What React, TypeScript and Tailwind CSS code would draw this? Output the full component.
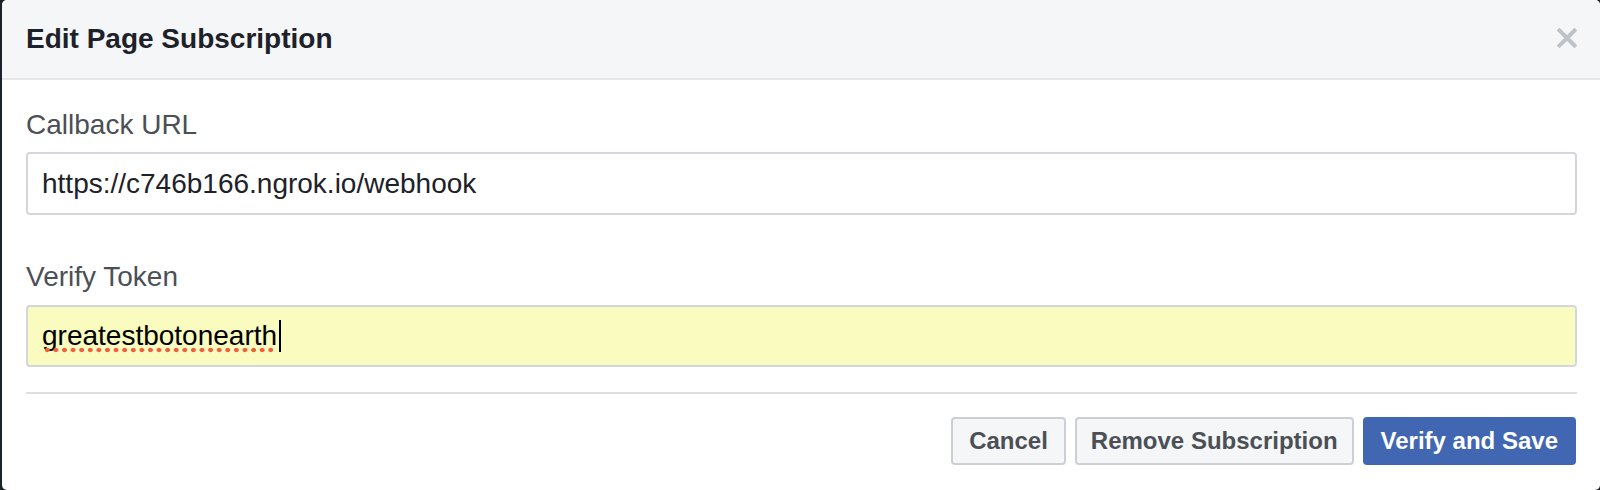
import React from "react";

export default function App() {
  return (
    <div
      className="w-[1600px] h-[490px] bg-[#1d2129] overflow-hidden flex"
      style={{ fontFamily: '"Liberation Sans", Arial, sans-serif' }}
    >
      <div className="ml-[2px] flex-1 h-full bg-white rounded-[5px] overflow-hidden flex flex-col">
        <div className="h-[80px] shrink-0 bg-[#f5f6f7] border-b-2 border-[#e5e6e9] flex items-center justify-between pl-[24px] pr-[23px]">
          <div className="text-[28px] leading-[32px] font-bold text-[#1d2129] -mt-[1px]">
            Edit Page Subscription
          </div>
          <svg width="20" height="20" viewBox="0 0 20 20" className="-mt-[2px]">
            <path
              d="M2.5 2.5 L17.5 17.5 M17.5 2.5 L2.5 17.5"
              stroke="#bec3c9"
              strokeWidth="4"
              strokeLinecap="square"
            />
          </svg>
        </div>
        <div className="pl-[24px] pr-[23px] flex flex-col">
          <div className="mt-[29px] text-[28px] leading-[32px] text-[#4b4f56]">Callback URL</div>
          <div className="mt-[11px] h-[63px] border-2 border-[#d3d6db] rounded-[4px] pl-[14px] flex items-center text-[28px] leading-[32px] text-[#1d2129] bg-white">
            https://c746b166.ngrok.io/webhook
          </div>
          <div className="mt-[46px] text-[28px] leading-[32px] text-[#4b4f56]">Verify Token</div>
          <div className="mt-[12px] h-[62px] border-2 border-[#d3d6db] rounded-[4px] pl-[14px] flex items-center text-[28px] leading-[32px] text-black bg-[#f9fbbf]">
            <span className="relative">
              greatestbotonearth
              <span className="absolute left-[1px] right-[1px] top-[27px] h-[6px] bg-[radial-gradient(circle,#f0603f_2px,transparent_2.6px)] bg-[length:8.6px_6px] bg-repeat-x" />
            </span>
            <span className="ml-[2px] w-[2px] h-[32px] bg-black" />
          </div>
          <div className="mt-[25px] h-[2px] bg-[#dddfe2]" />
          <div className="mt-[23px] flex justify-end gap-[9px] pr-[1px]">
            <button className="h-[48px] px-[16px] border-2 border-[#ccd0d5] bg-[#f5f6f7] rounded-[4px] text-[24px] leading-[28px] font-bold text-[#4b4f56]">
              Cancel
            </button>
            <button className="h-[48px] px-[14px] border-2 border-[#ccd0d5] bg-[#f5f6f7] rounded-[4px] text-[24px] leading-[28px] font-bold text-[#4b4f56]">
              Remove Subscription
            </button>
            <button className="h-[48px] px-[16px] border-2 border-[#4267b2] bg-[#4267b2] rounded-[4px] text-[24px] leading-[28px] font-bold text-white">
              Verify and Save
            </button>
          </div>
        </div>
      </div>
    </div>
  );
}
